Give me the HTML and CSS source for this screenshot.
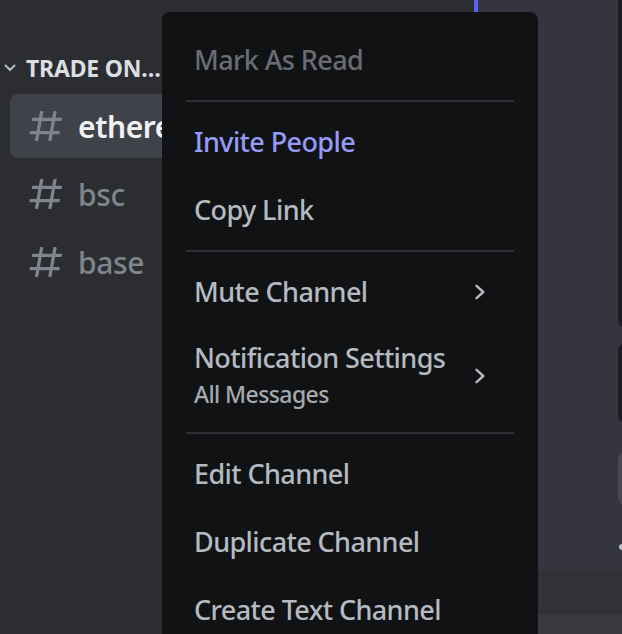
FILE: index.html
```html
<!DOCTYPE html>
<html lang="en">
<head>
<meta charset="utf-8">
<title>Channel context menu</title>
<link rel="stylesheet" href="styles.css">
</head>
<body>
<div class="app">
  <aside class="sidebar">
    <div class="category">
      <svg class="cat-chevron" width="12" height="8" viewBox="0 0 12 8"><path d="M1.5 1.5 L6 6 L10.5 1.5" fill="none" stroke="currentColor" stroke-width="2" stroke-linecap="round" stroke-linejoin="round"/></svg>
      <span class="cat-name">TRADE ON…</span>
    </div>
    <ul class="channels">
      <li class="channel selected">
        <svg class="hash" width="40" height="40" viewBox="0 0 24 24"><path fill="currentColor" fill-rule="evenodd" d="M5.88657 21C5.57547 21 5.3399 20.7189 5.39427 20.4126L6.00001 17H2.59511C2.28449 17 2.04905 16.7198 2.10259 16.4138L2.27759 15.4138C2.31946 15.1746 2.52722 15 2.77011 15H6.35001L7.41001 9H4.00511C3.69449 9 3.45905 8.71977 3.51259 8.41381L3.68759 7.41381C3.72946 7.17456 3.93722 7 4.18011 7H7.76001L8.39677 3.41262C8.43914 3.17391 8.64664 3 8.88907 3H9.87344C10.1845 3 10.4201 3.28107 10.3657 3.58738L9.76001 7H15.76L16.3968 3.41262C16.4391 3.17391 16.6466 3 16.8891 3H17.8734C18.1845 3 18.4201 3.28107 18.3657 3.58738L17.76 7H21.1649C21.4755 7 21.711 7.28023 21.6574 7.58619L21.4824 8.58619C21.4406 8.82544 21.2328 9 20.9899 9H17.41L16.35 15H19.7549C20.0655 15 20.301 15.2802 20.2474 15.5862L20.0724 16.5862C20.0306 16.8254 19.8228 17 19.5799 17H16L15.3632 20.5874C15.3209 20.8261 15.1134 21 14.8709 21H13.8866C13.5755 21 13.3399 20.7189 13.3943 20.4126L14 17H8.00001L7.36325 20.5874C7.32088 20.8261 7.11337 21 6.87094 21H5.88657ZM9.41045 9L8.35045 15H14.3504L15.4104 9H9.41045Z"/></svg>
        <span class="ch-name">ethereum</span>
      </li>
      <li class="channel">
        <svg class="hash" width="40" height="40" viewBox="0 0 24 24"><path fill="currentColor" fill-rule="evenodd" d="M5.88657 21C5.57547 21 5.3399 20.7189 5.39427 20.4126L6.00001 17H2.59511C2.28449 17 2.04905 16.7198 2.10259 16.4138L2.27759 15.4138C2.31946 15.1746 2.52722 15 2.77011 15H6.35001L7.41001 9H4.00511C3.69449 9 3.45905 8.71977 3.51259 8.41381L3.68759 7.41381C3.72946 7.17456 3.93722 7 4.18011 7H7.76001L8.39677 3.41262C8.43914 3.17391 8.64664 3 8.88907 3H9.87344C10.1845 3 10.4201 3.28107 10.3657 3.58738L9.76001 7H15.76L16.3968 3.41262C16.4391 3.17391 16.6466 3 16.8891 3H17.8734C18.1845 3 18.4201 3.28107 18.3657 3.58738L17.76 7H21.1649C21.4755 7 21.711 7.28023 21.6574 7.58619L21.4824 8.58619C21.4406 8.82544 21.2328 9 20.9899 9H17.41L16.35 15H19.7549C20.0655 15 20.301 15.2802 20.2474 15.5862L20.0724 16.5862C20.0306 16.8254 19.8228 17 19.5799 17H16L15.3632 20.5874C15.3209 20.8261 15.1134 21 14.8709 21H13.8866C13.5755 21 13.3399 20.7189 13.3943 20.4126L14 17H8.00001L7.36325 20.5874C7.32088 20.8261 7.11337 21 6.87094 21H5.88657ZM9.41045 9L8.35045 15H14.3504L15.4104 9H9.41045Z"/></svg>
        <span class="ch-name">bsc</span>
      </li>
      <li class="channel">
        <svg class="hash" width="40" height="40" viewBox="0 0 24 24"><path fill="currentColor" fill-rule="evenodd" d="M5.88657 21C5.57547 21 5.3399 20.7189 5.39427 20.4126L6.00001 17H2.59511C2.28449 17 2.04905 16.7198 2.10259 16.4138L2.27759 15.4138C2.31946 15.1746 2.52722 15 2.77011 15H6.35001L7.41001 9H4.00511C3.69449 9 3.45905 8.71977 3.51259 8.41381L3.68759 7.41381C3.72946 7.17456 3.93722 7 4.18011 7H7.76001L8.39677 3.41262C8.43914 3.17391 8.64664 3 8.88907 3H9.87344C10.1845 3 10.4201 3.28107 10.3657 3.58738L9.76001 7H15.76L16.3968 3.41262C16.4391 3.17391 16.6466 3 16.8891 3H17.8734C18.1845 3 18.4201 3.28107 18.3657 3.58738L17.76 7H21.1649C21.4755 7 21.711 7.28023 21.6574 7.58619L21.4824 8.58619C21.4406 8.82544 21.2328 9 20.9899 9H17.41L16.35 15H19.7549C20.0655 15 20.301 15.2802 20.2474 15.5862L20.0724 16.5862C20.0306 16.8254 19.8228 17 19.5799 17H16L15.3632 20.5874C15.3209 20.8261 15.1134 21 14.8709 21H13.8866C13.5755 21 13.3399 20.7189 13.3943 20.4126L14 17H8.00001L7.36325 20.5874C7.32088 20.8261 7.11337 21 6.87094 21H5.88657ZM9.41045 9L8.35045 15H14.3504L15.4104 9H9.41045Z"/></svg>
        <span class="ch-name">base</span>
      </li>
    </ul>
  </aside>
  <div class="drop-bar"></div>
  <main class="main">
    <div class="chat">
      <div class="edge-stack">
        <div class="edge-panel edge-dark edge-tall"></div>
        <div class="edge-panel edge-dark edge-short"></div>
        <div class="edge-panel edge-grey"></div>
        <div class="edge-dot"></div>
      </div>
    </div>
    <div class="band-a"></div>
    <div class="band-b"></div>
  </main>
</div>

<div class="menu" role="menu">
  <div class="menu-item disabled">Mark As Read</div>
  <div class="separator"></div>
  <div class="menu-item brand">Invite People</div>
  <div class="menu-item">Copy Link</div>
  <div class="separator"></div>
  <div class="menu-item">
    <span>Mute Channel</span>
    <svg class="caret" width="12" height="16" viewBox="0 0 12 16"><path d="M2.5 1.8 L9.3 8 L2.5 14.2" fill="none" stroke="currentColor" stroke-width="2.4" stroke-linecap="round" stroke-linejoin="round"/></svg>
  </div>
  <div class="menu-item tall">
    <div class="two-line">
      <span class="title">Notification Settings</span>
      <span class="sub">All Messages</span>
    </div>
    <svg class="caret" width="12" height="16" viewBox="0 0 12 16"><path d="M2.5 1.8 L9.3 8 L2.5 14.2" fill="none" stroke="currentColor" stroke-width="2.4" stroke-linecap="round" stroke-linejoin="round"/></svg>
  </div>
  <div class="separator"></div>
  <div class="menu-item">Edit Channel</div>
  <div class="menu-item">Duplicate Channel</div>
  <div class="menu-item">Create Text Channel</div>
</div>
</body>
</html>
```

FILE: styles.css
```css
* { box-sizing: border-box; }

html, body {
  margin: 0;
  padding: 0;
  width: 622px;
  height: 634px;
  overflow: hidden;
  background: #34353f;
  font-family: "Noto Sans", "Open Sans", sans-serif;
}

.app {
  display: flex;
  width: 622px;
  height: 634px;
  position: relative;
}

.sidebar {
  width: 474px;
  flex: none;
  background: #2b2d31;
  padding-top: 44px;
}

.category {
  height: 48px;
  margin-bottom: 2px;
  display: flex;
  align-items: center;
  padding-left: 4px;
  color: #dbdee1;
}

.cat-chevron {
  color: #b5bac1;
  flex: none;
}

.cat-name {
  margin-left: 10px;
  font-size: 23px;
  font-weight: 700;
  letter-spacing: -0.2px;
  white-space: nowrap;
}

.channels {
  list-style: none;
  margin: 0 16px 0 10px;
  padding: 0;
}

.channel {
  height: 64px;
  margin-bottom: 4px;
  border-radius: 8px;
  padding-left: 16px;
  display: flex;
  align-items: center;
  color: #80848e;
}

.channel .hash {
  flex: none;
  color: #80848e;
}

.ch-name {
  margin-left: 12px;
  font-size: 30px;
  font-weight: 500;
  letter-spacing: -0.4px;
  white-space: nowrap;
}

.channel.selected {
  background: #404249;
}

.channel.selected .ch-name {
  color: #f2f3f5;
  font-weight: 600;
}

.drop-bar {
  width: 4px;
  flex: none;
  background: #5865f2;
}

.main {
  flex: 1;
  display: flex;
  flex-direction: column;
  background: #34353f;
}

.chat {
  flex: 1;
  display: flex;
  justify-content: flex-end;
}

.edge-stack {
  width: 40px;
  margin-right: -36px;
  display: flex;
  flex-direction: column;
}

.edge-panel {
  border-radius: 8px;
}

.edge-dark {
  background: #1c1d21;
}

.edge-tall {
  height: 328px;
  border-radius: 0 0 0 8px;
}

.edge-short {
  margin-top: 15px;
  height: 80px;
}

.edge-grey {
  margin-top: 29px;
  height: 53px;
  background: #474851;
}

.edge-dot {
  margin-top: 39px;
  margin-left: 1px;
  width: 6px;
  height: 6px;
  border-radius: 50%;
  background: #b5bac1;
}

.band-a {
  height: 44px;
  background: #313236;
}

.band-b {
  height: 20px;
  background: #38393e;
}

.menu {
  position: absolute;
  top: 12px;
  left: 162px;
  width: 376px;
  padding: 14px 16px;
  background: #111214;
  border-radius: 8px;
  display: flex;
  flex-direction: column;
}

.menu-item {
  height: 64px;
  margin: 2px 0;
  padding: 0 16px 0 16px;
  display: flex;
  align-items: center;
  justify-content: space-between;
  font-size: 27px;
  font-weight: 500;
  letter-spacing: -0.6px;
  line-height: 1.25;
  color: #b5bac1;
  white-space: nowrap;
}

.menu-item.disabled {
  color: #6a6c73;
}

.menu-item.brand {
  color: #949cf7;
}

.menu-item.tall {
  height: 96px;
}

.two-line {
  display: flex;
  flex-direction: column;
}

.two-line .title {
  line-height: 36px;
}

.two-line .sub {
  font-size: 23px;
  letter-spacing: -0.6px;
  line-height: 36px;
  color: #a5a9b0;
}

.caret {
  flex: none;
  margin-right: 20px;
  color: #b5bac1;
}

.separator {
  height: 2px;
  margin: 6px 8px;
  background: #2e2f34;
}
```
